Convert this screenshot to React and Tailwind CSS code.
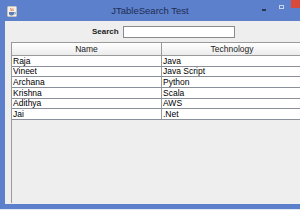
import React from 'react';

const rows = [
  ['Raja', 'Java'],
  ['Vineet', 'Java Script'],
  ['Archana', 'Python'],
  ['Krishna', 'Scala'],
  ['Adithya', 'AWS'],
  ['Jai', '.Net'],
];

const JavaIcon = () => (
  <svg width="10" height="11" viewBox="0 0 10 11">
    <rect x="0.5" y="0.5" width="9" height="10" rx="1" fill="#f4f1ea" stroke="#c9c4b8" />
    <path d="M4 2 C3 3 5 3.5 4 5 M6 2.5 C5.2 3.3 6.6 3.8 5.8 5" stroke="#d9532c" strokeWidth="0.9" fill="none" />
    <path d="M2 6 h5 v1.5 a2 2 0 0 1 -2 2 h-1 a2 2 0 0 1 -2 -2 z" fill="#5a7db5" />
    <path d="M7 6.4 h0.8 a0.8 0.8 0 0 1 0 1.6 h-0.8" stroke="#5a7db5" strokeWidth="0.7" fill="none" />
  </svg>
);

const App = () => {
  return (
    <div
      className="w-[300px] h-[210px] bg-[#5c80cc] flex flex-col overflow-hidden"
      style={{ fontFamily: '"Liberation Sans", Arial, sans-serif' }}
    >
      {/* Title bar */}
      <div className="h-[21px] flex items-center relative shrink-0">
        <div className="ml-[7px] mt-[1px]">
          <JavaIcon />
        </div>
        <div className="absolute left-0 right-0 top-[4px] text-center text-[9.5px] text-[#1f2c52]">
          JTableSearch Test
        </div>
        <div className="absolute left-[262px] top-[9px] w-[4px] h-[1.5px] bg-[#2a3550]" />
        <div className="absolute left-[279px] top-[5px] w-[5px] h-[4px] border border-[#c8d4ee]" />
        <div className="absolute left-[291px] top-0 w-[9px] h-[8px] bg-[#d94a3c]" />
      </div>

      {/* Content */}
      <div className="ml-[5px] h-[183px] bg-[#eeeeee] flex flex-col shrink-0">
        <div className="h-[21px] flex items-center pt-[1px]">
          <span className="ml-[87px] text-[8px] font-bold text-[#222]">Search</span>
          <div className="ml-[4px] w-[112px] h-[12px] bg-white border border-[#8a8a8a]" />
        </div>
        <div className="ml-[6px] w-[291px] flex-1 mb-[1px] border-l border-t border-[#9a9a9a] flex flex-col">
          <div className="h-[13px] flex border-b border-[#9a9a9a] bg-gradient-to-b from-white to-[#ececec] text-[8.5px] text-[#222]">
            <div className="w-[150px] border-r border-[#9a9a9a] flex items-center justify-center">Name</div>
            <div className="flex-1 flex items-center justify-center">Technology</div>
          </div>
          {rows.map(([name, tech]) => (
            <div key={name} className="h-[10.7px] flex bg-white border-b border-[#8a8f99] text-[8.5px] text-black leading-none">
              <div className="w-[150px] border-r border-[#9a9a9a] pl-[1px] flex items-center">{name}</div>
              <div className="flex-1 pl-[1px] flex items-center">{tech}</div>
            </div>
          ))}
        </div>
      </div>

      <div className="h-[5px] shrink-0" />
      <div className="h-[1px] bg-[#e4e8f0] shrink-0" />
    </div>
  );
};

export default App;
